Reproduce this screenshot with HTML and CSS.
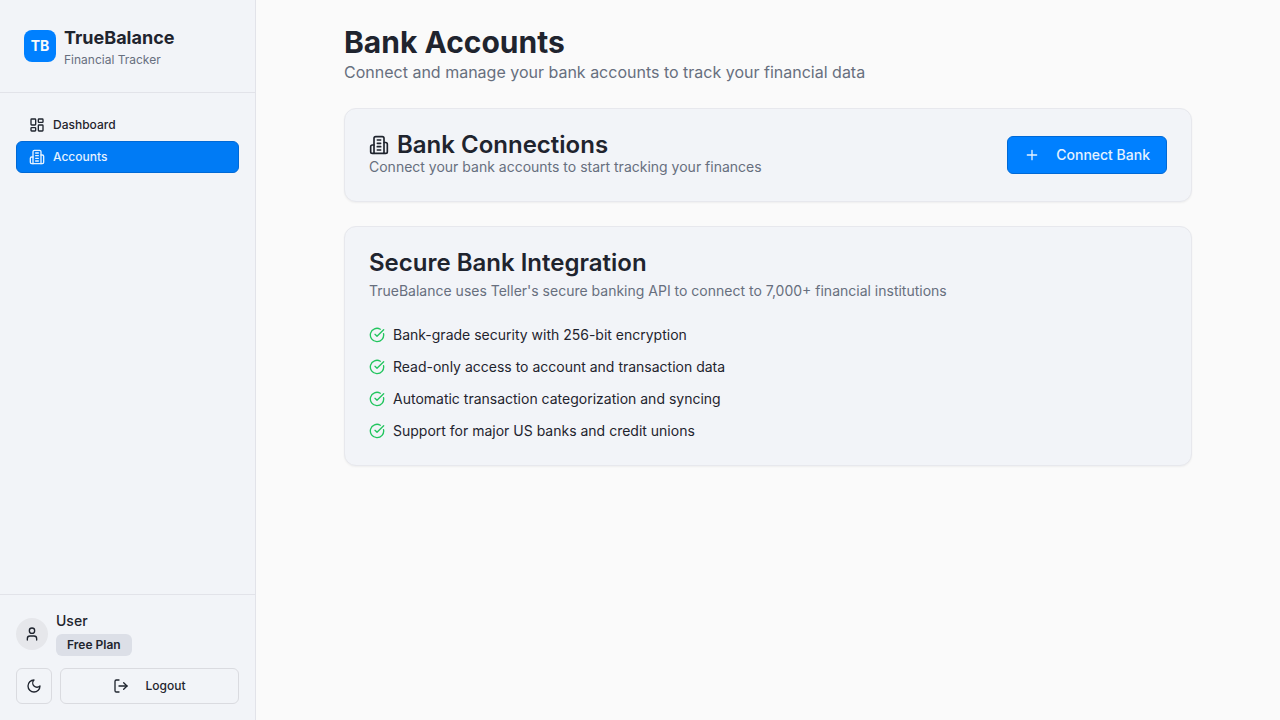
FILE: index.html
```html
<!DOCTYPE html>
<html lang="en">
<head>
<meta charset="utf-8">
<meta name="viewport" content="width=device-width, initial-scale=1">
<title>TrueBalance - Bank Accounts</title>
<link rel="stylesheet" href="styles.css">
</head>
<body>
<svg class="sprite" aria-hidden="true">
  <symbol id="building" viewBox="0 0 24 24"><path d="M6 22V4a2 2 0 0 1 2-2h8a2 2 0 0 1 2 2v18Z"/><path d="M6 12H4a2 2 0 0 0-2 2v6a2 2 0 0 0 2 2h2"/><path d="M18 9h2a2 2 0 0 1 2 2v9a2 2 0 0 1-2 2h-2"/><path d="M10 6h4M10 10h4M10 14h4M10 18h4"/></symbol>
  <symbol id="check" viewBox="0 0 24 24"><path d="M21.801 10A10 10 0 1 1 17 3.335"/><path d="m9 11 3 3L22 4"/></symbol>
</svg>
<div class="app">
  <aside class="sidebar">
    <div class="brand">
      <div class="brand-logo">TB</div>
      <div>
        <div class="brand-name">TrueBalance</div>
        <div class="brand-tagline">Financial Tracker</div>
      </div>
    </div>
    <nav class="nav">
      <a class="nav-link" href="#dashboard">
        <svg class="icon" viewBox="0 0 24 24" aria-hidden="true"><rect width="7" height="9" x="3" y="3" rx="1"/><rect width="7" height="5" x="14" y="3" rx="1"/><rect width="7" height="9" x="14" y="12" rx="1"/><rect width="7" height="5" x="3" y="16" rx="1"/></svg>
        Dashboard
      </a>
      <a class="nav-link nav-link-active" href="#accounts" aria-current="page">
        <svg class="icon" aria-hidden="true"><use href="#building"/></svg>
        Accounts
      </a>
    </nav>
    <div class="sidebar-footer">
      <div class="user">
        <div class="avatar">
          <svg class="icon" viewBox="0 0 24 24" aria-hidden="true"><path d="M19 21v-2a4 4 0 0 0-4-4H9a4 4 0 0 0-4 4v2"/><circle cx="12" cy="7" r="4"/></svg>
        </div>
        <div class="user-info">
          <div class="user-name">User</div>
          <div class="badge">Free Plan</div>
        </div>
      </div>
      <div class="actions">
        <button class="button button-outline button-square" type="button" aria-label="Toggle dark mode">
          <svg class="icon" viewBox="0 0 24 24" aria-hidden="true"><path d="M12 3a6 6 0 0 0 9 9 9 9 0 1 1-9-9Z"/></svg>
        </button>
        <button class="button button-outline button-logout" type="button">
          <svg class="icon" viewBox="0 0 24 24" aria-hidden="true"><path d="M9 21H5a2 2 0 0 1-2-2V5a2 2 0 0 1 2-2h4"/><path d="m16 17 5-5-5-5"/><path d="M21 12H9"/></svg>
          Logout
        </button>
      </div>
    </div>
  </aside>
  <main class="main">
    <div class="content">
      <header>
        <h1 class="page-title">Bank Accounts</h1>
        <p class="page-subtitle">Connect and manage your bank accounts to track your financial data</p>
      </header>
      <section class="card card-row">
        <div>
          <h2 class="card-title"><svg class="icon icon-large" aria-hidden="true"><use href="#building"/></svg>Bank Connections</h2>
          <p class="card-text">Connect your bank accounts to start tracking your finances</p>
        </div>
        <button class="button button-primary" type="button">
          <svg class="icon" viewBox="0 0 24 24" aria-hidden="true"><path d="M5 12h14M12 5v14"/></svg>
          Connect Bank
        </button>
      </section>
      <section class="card card-stack">
        <div class="card-header">
          <h2 class="card-title">Secure Bank Integration</h2>
          <p class="card-text">TrueBalance uses Teller's secure banking API to connect to 7,000+ financial institutions</p>
        </div>
        <ul class="features">
          <li class="feature"><svg class="icon icon-success" aria-hidden="true"><use href="#check"/></svg>Bank-grade security with 256-bit encryption</li>
          <li class="feature"><svg class="icon icon-success" aria-hidden="true"><use href="#check"/></svg>Read-only access to account and transaction data</li>
          <li class="feature"><svg class="icon icon-success" aria-hidden="true"><use href="#check"/></svg>Automatic transaction categorization and syncing</li>
          <li class="feature"><svg class="icon icon-success" aria-hidden="true"><use href="#check"/></svg>Support for major US banks and credit unions</li>
        </ul>
      </section>
    </div>
  </main>
</div>
</body>
</html>
```
FILE: styles.css
```css
*, *::before, *::after { box-sizing: border-box; }

body {
  margin: 0;
  background: #fafafa;
  color: #1f242e;
  font-family: Inter, "Liberation Sans", sans-serif;
  font-size: 14px;
  line-height: 20px;
}

h1, h2, p, ul { margin: 0; padding: 0; }

.sprite { display: none; }

.icon {
  width: 16px;
  height: 16px;
  flex-shrink: 0;
  fill: none;
  stroke: currentColor;
  stroke-width: 2;
  stroke-linecap: round;
  stroke-linejoin: round;
}
.icon-large { width: 20px; height: 20px; }
.icon-success { color: #22c55e; }

.app { display: flex; min-height: 100vh; }

.sidebar {
  display: flex;
  flex-direction: column;
  flex-shrink: 0;
  width: 256px;
  background: #f2f4f8;
  border-right: 1px solid #e2e3e9;
}

.brand {
  display: flex;
  align-items: center;
  gap: 8px;
  padding: 24px;
  border-bottom: 1px solid #e2e3e9;
}
.brand-logo {
  display: flex;
  align-items: center;
  justify-content: center;
  width: 32px;
  height: 32px;
  border-radius: 8px;
  background: #0080ff;
  color: #fafafa;
  font-weight: 700;
}
.brand-name { font-size: 18px; line-height: 28px; font-weight: 700; }
.brand-tagline { font-size: 12px; line-height: 16px; color: #676f7e; }

.nav { display: flex; flex-direction: column; flex: 1; padding: 16px; }
.nav-link {
  display: flex;
  align-items: center;
  gap: 8px;
  min-height: 32px;
  padding: 0 12px;
  border: 1px solid transparent;
  border-radius: 6px;
  color: inherit;
  font-size: 12px;
  font-weight: 500;
  text-decoration: none;
}
.nav-link-active { background: #007bf5; border-color: #0069d6; color: #e5f2ff; }

.sidebar-footer {
  display: flex;
  flex-direction: column;
  gap: 12px;
  padding: 16px;
  border-top: 1px solid #e2e3e9;
}
.user { display: flex; align-items: center; gap: 8px; }
.avatar {
  display: flex;
  align-items: center;
  justify-content: center;
  width: 32px;
  height: 32px;
  border-radius: 50%;
  background: #e6e7eb;
}
.user-info { display: flex; flex-direction: column; align-items: flex-start; gap: 3px; }
.user-name { font-weight: 500; }
.badge {
  padding: 2px 10px;
  border: 1px solid transparent;
  border-radius: 6px;
  background: #dcdfe7;
  font-size: 12px;
  line-height: 16px;
  font-weight: 600;
}

.actions { display: flex; gap: 8px; }
.button {
  display: inline-flex;
  align-items: center;
  justify-content: center;
  gap: 16px;
  min-height: 36px;
  padding: 0 12px;
  border: 1px solid;
  border-radius: 6px;
  font: inherit;
  font-weight: 500;
  color: inherit;
  cursor: pointer;
}
.button-outline { background: transparent; border-color: #dadbe0; font-size: 12px; }
.button-square { width: 36px; padding: 0; }
.button-logout { flex: 1; }
.button-primary {
  min-height: 38px;
  padding: 0 16px;
  background: #0080ff;
  border-color: #0069d6;
  color: #e5f2ff;
}

.main { flex: 1; min-width: 0; }
.content {
  display: flex;
  flex-direction: column;
  gap: 24px;
  max-width: 896px;
  margin: 0 auto;
  padding: 24px;
}
.page-title { font-size: 30px; line-height: 36px; font-weight: 700; }
.page-subtitle { font-size: 16px; line-height: 24px; color: #676f7e; }

.card {
  padding: 24px;
  background: #f2f4f8;
  border: 1px solid #e7e8ed;
  border-radius: 12px;
  box-shadow: 0 1px 2px rgba(0, 0, 0, 0.05);
}
.card-row { display: flex; align-items: center; justify-content: space-between; gap: 24px; }
.card-stack { display: flex; flex-direction: column; gap: 24px; }
.card-header { display: flex; flex-direction: column; gap: 6px; }
.card-title {
  display: flex;
  align-items: center;
  gap: 8px;
  font-size: 24px;
  line-height: 24px;
  font-weight: 600;
}
.card-text { color: #676f7e; }

.features { display: flex; flex-direction: column; gap: 12px; list-style: none; }
.feature { display: flex; align-items: center; gap: 8px; }
```
